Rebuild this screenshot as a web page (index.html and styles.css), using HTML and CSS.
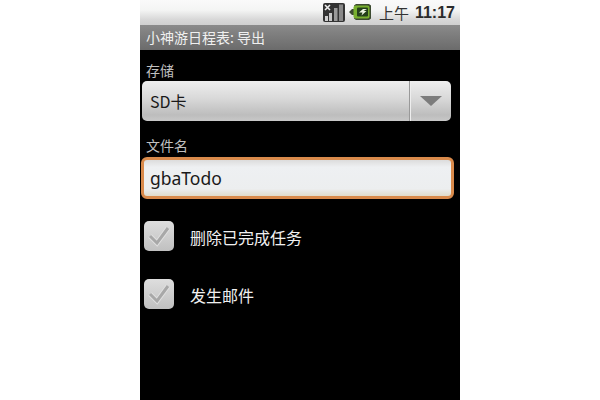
FILE: index.html
```
<!DOCTYPE html>
<html lang="zh">
<head>
<meta charset="utf-8">
<title>小神游日程表: 导出</title>
<link rel="stylesheet" href="styles.css">
</head>
<body>
<div class="phone">
  <div class="status">
    <svg class="signal" width="22" height="19" viewBox="0 0 22 19">
      <rect width="22" height="19" rx="2" fill="#333"/>
      <path d="M2 2l5 5M7 2l-5 5" stroke="#eee" stroke-width="1.600"/>
      <rect x="2" y="13" width="3" height="5" fill="#d0d0d0"/>
      <rect x="6" y="10" width="3" height="8" fill="#c8c8c8"/>
      <rect x="11" y="5" width="3.500" height="13" fill="#9a9a9a"/>
      <rect x="16" y="1.500" width="4" height="16.500" fill="#888"/>
    </svg>
    <svg class="battery" width="22" height="16" viewBox="0 0 22 16">
      <path d="M0 8l3-3h2V1.500L7 0h13l2 1.500v13L20 16H7l-2-1.500V11H3z" fill="#3c4a30"/>
      <rect x="4.500" y="1.500" width="16" height="13" rx="2" fill="#78b02e"/>
      <rect x="8" y="3.500" width="11" height="9" rx="1" fill="#24401a"/>
      <path d="M10 8.500l4-3.500h4l-3.500 2h3l-5 4.500 1-3z" fill="#eef6e2"/>
    </svg>
    <span class="ampm">上午</span>
    <span class="clock">11:17</span>
  </div>
  <div class="titlebar">小神游日程表: 导出</div>
  <main class="content">
    <div class="label">存储</div>
    <div class="spinner">
      <span class="spinner-text">SD卡</span>
      <span class="spinner-arrow"><span class="triangle"></span></span>
    </div>
    <div class="label label-file">文件名</div>
    <div class="edit">gbaTodo</div>
    <div class="check-row">
      <span class="box"><svg width="30" height="30" viewBox="0 0 30 30"><path d="M6 15l7 7 11-15" fill="none" stroke="#e0e0e0" stroke-width="5"/><path d="M6 15l7 7 11-15" fill="none" stroke="#a8a8a8" stroke-width="3"/></svg></span>
      <span class="check-label">删除已完成任务</span>
    </div>
    <div class="check-row">
      <span class="box"><svg width="30" height="30" viewBox="0 0 30 30"><path d="M6 15l7 7 11-15" fill="none" stroke="#e0e0e0" stroke-width="5"/><path d="M6 15l7 7 11-15" fill="none" stroke="#a8a8a8" stroke-width="3"/></svg></span>
      <span class="check-label">发生邮件</span>
    </div>
  </main>
</div>
</body>
</html>
```
FILE: styles.css
```
html, body {
  margin: 0;
  padding: 0;
  background: #fff;
  height: 100%;
  overflow: hidden;
}
.phone {
  width: 320px;
  height: 400px;
  margin: 0 auto;
  background: #000;
  font-family: "Noto Sans CJK SC", "Liberation Sans", sans-serif;
  display: flex;
  flex-direction: column;
}
.status {
  height: 25px;
  box-sizing: border-box;
  flex: none;
  display: flex;
  align-items: center;
  padding-right: 5px;
  justify-content: flex-end;
  background: linear-gradient(#fafafa 0, #f4f5f4 40%, #d6d6d6 80%, #cfcfcf 100%);
  color: #222;
}
.signal { margin-right: 4px; }
.battery { margin-right: 8px; margin-top: -2px; }
.ampm { font-size: 15px; margin-right: 6px; color: #333; }
.clock {
  font-family: "Liberation Sans", sans-serif;
  font-weight: 700;
  font-size: 16px;
  color: #2a2a2a;
}
.titlebar {
  height: 25px;
  flex: none;
  box-sizing: border-box;
  padding-left: 6px;
  line-height: 24px;
  font-size: 14px;
  color: #f0f0f0;
  background: linear-gradient(#8a8a8a, #6b6b6b);
}
.content {
  flex: 1;
  display: flex;
  flex-direction: column;
  padding: 11px 6px 0 2px;
}
.label {
  font-size: 14px;
  line-height: 18px;
  height: 20px;
  color: #c0c0c0;
  padding-left: 4px;
}
.spinner {
  height: 40px;
  width: 309px;
  flex: none;
  box-sizing: border-box;
  border-radius: 5px;
  display: flex;
  background: linear-gradient(#eeeeee 0, #d8d8d8 45%, #bdbdbd 85%, #c8c8c8 100%);
}
.spinner-text {
  flex: 1;
  padding-left: 8px;
  line-height: 40px;
  font-size: 16px;
  color: #1a1a1a;
}
.spinner-arrow {
  width: 40px;
  border-left: 1px solid #eee;
  box-shadow: -1px 0 0 #999;
  display: flex;
  align-items: center;
  justify-content: center;
}
.triangle {
  width: 0;
  height: 0;
  border-left: 11px solid transparent;
  border-right: 11px solid transparent;
  border-top: 10px solid #7c7c7c;
}
.label-file { margin-top: 15px; height: 21px; }
.edit {
  height: 42px;
  width: 313px;
  margin-left: -1px;
  flex: none;
  box-sizing: border-box;
  border: 3px solid #d98a4b;
  border-radius: 6px;
  background: linear-gradient(#dcdcdc 0, #eef0f2 20%, #eceeef 80%, #e0dccb 100%);
  padding-left: 6px;
  line-height: 37px;
  font-family: "Noto Sans", sans-serif;
  font-size: 17.500px;
  color: #1a1a1a;
}
.check-row {
  display: flex;
  align-items: center;
  height: 30px;
  margin-left: 2px;
}
.edit + .check-row { margin-top: 22px; }
.check-row + .check-row { margin-top: 28px; }
.box {
  width: 30px;
  height: 30px;
  flex: none;
  border-radius: 5px;
  background: linear-gradient(#dedede, #c0c0c0);
}
.box svg { display: block; }
.check-label {
  margin-left: 16px;
  font-size: 16px;
  padding-top: 2px;
  color: #f0f0f0;
}
```
